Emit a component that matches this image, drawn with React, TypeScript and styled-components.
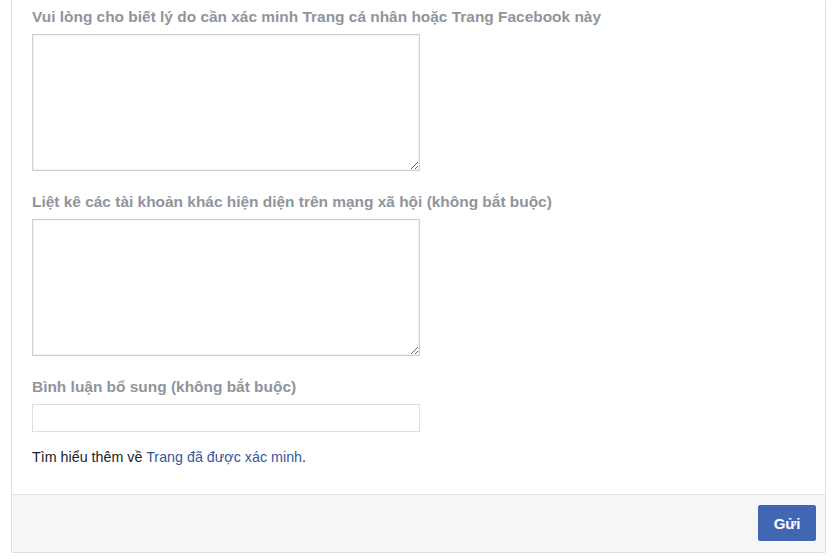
import styled, { createGlobalStyle } from 'styled-components';

const GlobalStyle = createGlobalStyle`
    body {
        margin: 0;
        background: #ffffff;
        font-family: 'Liberation Sans', Arial, sans-serif;
    }
`;

const App = () => {
    return (
        <>
            <GlobalStyle />
            <Panel>
                <Body>
                    <Field $space={21}>
                        <Label>Vui lòng cho biết lý do cần xác minh Trang cá nhân hoặc Trang Facebook này</Label>
                        <TextArea />
                    </Field>
                    <Field $space={21}>
                        <Label>Liệt kê các tài khoản khác hiện diện trên mạng xã hội (không bắt buộc)</Label>
                        <TextArea />
                    </Field>
                    <Field $space={17}>
                        <Label>Bình luận bổ sung (không bắt buộc)</Label>
                        <Input type="text" />
                    </Field>
                    <Note>
                        Tìm hiểu thêm về <a href="#">Trang đã được xác minh</a>.
                    </Note>
                </Body>
                <Footer>
                    <SubmitButton>Gửi</SubmitButton>
                </Footer>
            </Panel>
        </>
    );
};
export default App;

const Panel = styled.div`
    margin-left: 11px;
    width: 815px;
    box-sizing: border-box;
    border: 1px solid #dddfe2;
    border-top: none;
    border-radius: 0 0 3px 3px;
    background: #fff;
    box-shadow: 0 1px 1px rgba(0, 0, 0, 0.06);
`;

const Body = styled.div`
    padding: 7px 20px 28px 20px;
    display: flex;
    flex-direction: column;
`;

const Field = styled.div<{ $space?: number }>`
    display: flex;
    flex-direction: column;
    margin-bottom: ${(p) => p.$space ?? 20}px;
`;

const Label = styled.div`
    font-size: 15.45px;
    font-weight: 700;
    color: #90949c;
    line-height: 19px;
    margin-bottom: 8px;
`;

const TextArea = styled.textarea`
    width: 388px;
    height: 137px;
    box-sizing: border-box;
    border: 1px solid #ccd0d5;
    border-radius: 0;
    padding: 4px;
    font-family: 'Liberation Sans', Arial, sans-serif;
    font-size: 12px;
    outline: none;
    box-shadow: inset 0 0 0 1px #f1f2f4;
`;

const Input = styled.input`
    width: 388px;
    height: 28px;
    box-sizing: border-box;
    border: 1px solid #dddfe2;
    padding: 3px;
    font-family: 'Liberation Sans', Arial, sans-serif;
    font-size: 12px;
    outline: none;
`;

const Note = styled.div`
    font-size: 14.3px;
    color: #1d2129;
    line-height: 17px;
    a {
        color: #365899;
        text-decoration: none;
    }
`;

const Footer = styled.div`
    background: #f5f6f7;
    border-top: 1px solid #e5e5e5;
    padding: 10px 9px 11px 0;
    display: flex;
    justify-content: flex-end;
    border-radius: 0 0 3px 3px;
`;

const SubmitButton = styled.button`
    width: 58px;
    height: 36px;
    background: #4267b2;
    border: 1px solid #4267b2;
    border-radius: 2px;
    color: #fff;
    font-family: 'Liberation Sans', Arial, sans-serif;
    font-size: 15px;
    font-weight: 700;
    cursor: pointer;
`;
